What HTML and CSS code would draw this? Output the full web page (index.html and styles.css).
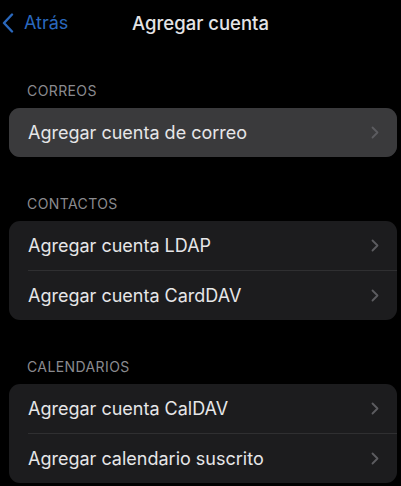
FILE: index.html
```html
<!DOCTYPE html>
<html lang="es">
<head>
  <meta charset="UTF-8" />
  <meta name="viewport" content="width=device-width, initial-scale=1" />
  <title>Agregar cuenta</title>
  <link rel="stylesheet" href="styles.css">
</head>
<body>

  <!-- Barra superior -->
  <div class="barra">
    <a class="atras" href="#">
      <svg class="atras-icono" width="12" height="20" viewBox="0 0 12 20">
        <path d="M10 1.5 L2 10 L10 18.5" fill="none" stroke="currentColor" stroke-width="2.4" stroke-linecap="round" stroke-linejoin="round"/>
      </svg>
      Atrás
    </a>
    <div class="titulo">Agregar cuenta</div>
    <div></div>
  </div>

  <!-- CORREOS -->
  <div class="grupo primero">
    <div class="etiqueta">CORREOS</div>
    <div class="tarjeta">
      <div class="fila activa">
        <span>Agregar cuenta de correo</span>
        <svg class="flecha" width="8" height="13" viewBox="0 0 8 13"><path d="M1.5 1.5 L6.5 6.5 L1.5 11.5" fill="none" stroke="currentColor" stroke-width="1.8" stroke-linecap="round" stroke-linejoin="round"/></svg>
      </div>
    </div>
  </div>

  <!-- CONTACTOS -->
  <div class="grupo">
    <div class="etiqueta">CONTACTOS</div>
    <div class="tarjeta">
      <div class="fila">
        <span>Agregar cuenta LDAP</span>
        <svg class="flecha" width="8" height="13" viewBox="0 0 8 13"><path d="M1.5 1.5 L6.5 6.5 L1.5 11.5" fill="none" stroke="currentColor" stroke-width="1.8" stroke-linecap="round" stroke-linejoin="round"/></svg>
      </div>
      <div class="fila">
        <span>Agregar cuenta CardDAV</span>
        <svg class="flecha" width="8" height="13" viewBox="0 0 8 13"><path d="M1.5 1.5 L6.5 6.5 L1.5 11.5" fill="none" stroke="currentColor" stroke-width="1.8" stroke-linecap="round" stroke-linejoin="round"/></svg>
      </div>
    </div>
  </div>

  <!-- CALENDARIOS -->
  <div class="grupo">
    <div class="etiqueta">CALENDARIOS</div>
    <div class="tarjeta">
      <div class="fila">
        <span>Agregar cuenta CalDAV</span>
        <svg class="flecha" width="8" height="13" viewBox="0 0 8 13"><path d="M1.5 1.5 L6.5 6.5 L1.5 11.5" fill="none" stroke="currentColor" stroke-width="1.8" stroke-linecap="round" stroke-linejoin="round"/></svg>
      </div>
      <div class="fila">
        <span>Agregar calendario suscrito</span>
        <svg class="flecha" width="8" height="13" viewBox="0 0 8 13"><path d="M1.5 1.5 L6.5 6.5 L1.5 11.5" fill="none" stroke="currentColor" stroke-width="1.8" stroke-linecap="round" stroke-linejoin="round"/></svg>
      </div>
    </div>
  </div>

</body>
</html>
```

FILE: styles.css
```css
body {
  background: #000;
  color: #e6e6e8;
  font-family: Inter, "Noto Sans", sans-serif;
  margin: 0;
  padding: 0;
}

.barra {
  height: 45px;
  display: grid;
  grid-template-columns: 1fr auto 1fr;
  align-items: center;
}

.atras {
  display: flex;
  align-items: center;
  gap: 10px;
  padding-left: 2px;
  color: #2a68bd;
  font-size: 18px;
  text-decoration: none;
}

.titulo {
  font-size: 18.5px;
  font-weight: 500;
  color: #e4e4e6;
}

.grupo {
  margin-top: 39px;
}

.grupo.primero {
  margin-top: 38px;
}

.etiqueta {
  font-size: 14px;
  line-height: 16px;
  letter-spacing: 0.4px;
  color: #8a8a8f;
  padding-left: 27px;
  margin-bottom: 9px;
}

.tarjeta {
  margin: 0 4px 0 9px;
  background: #1c1c1e;
  border-radius: 11px;
  overflow: hidden;
}

.fila {
  height: 49px;
  display: flex;
  align-items: center;
  justify-content: space-between;
  padding: 0 18px 0 19px;
  font-size: 18px;
  position: relative;
}

.fila + .fila {
  height: 50px;
  padding-top: 1px;
  box-sizing: border-box;
}

/* separador con sangría */
.fila + .fila::before {
  content: "";
  position: absolute;
  top: 0;
  left: 19px;
  right: 0;
  border-top: 1px solid #2f2f31;
}

.fila.activa {
  background: #3a3a3c;
}

.flecha {
  color: #5c5c60;
}
```
